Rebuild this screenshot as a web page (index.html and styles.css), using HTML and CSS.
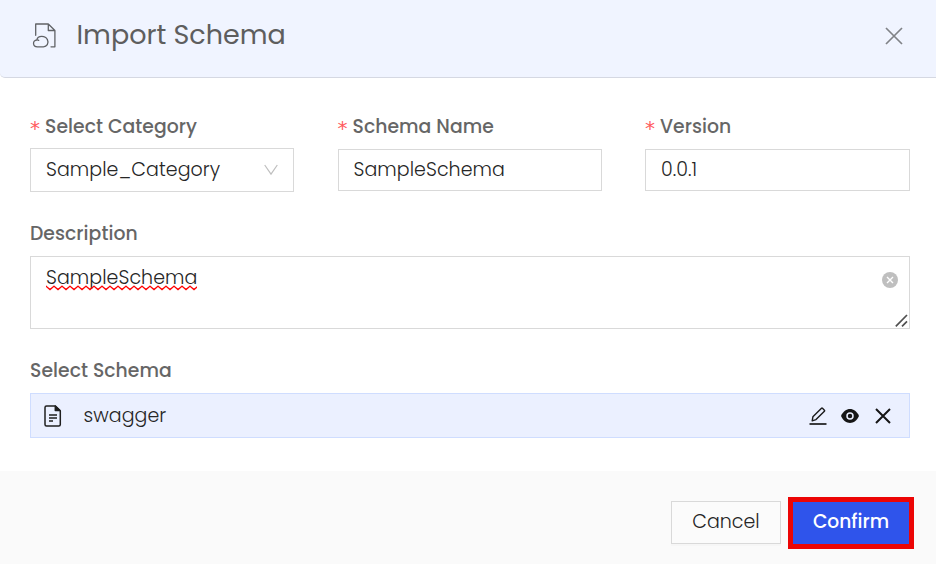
FILE: index.html
```html
<!DOCTYPE html>
<html lang="en">
<head>
<meta charset="utf-8">
<title>Import Schema</title>
<link rel="stylesheet" href="styles.css">
</head>
<body>
<div class="modal">
  <header class="header">
    <svg class="header-icon" width="26" height="26" viewBox="0 0 26 26" fill="none" stroke="#606266" stroke-width="1.3" stroke-linejoin="round" stroke-linecap="round">
      <path d="M3.7 12.3V1H16.3L22.9 7.5V23.8H19M16.3 1V7.5H22.9"/>
      <path d="M5.4 23.8C.4 23.8 .3 17.2 4.8 17C5.8 11.8 13.6 12.6 15.3 16.4C17.4 20.6 14.6 23.8 11.4 23.8ZM4.8 17Q5.8 16.8 6.7 17.4"/>
    </svg>
    <h1 class="title">Import Schema</h1>
    <svg class="close" width="18" height="18" viewBox="0 0 18 18" stroke="#808287" stroke-width="1.7"><path d="M1 1L17 17M17 1L1 17"/></svg>
  </header>
  <main class="body">
    <div class="fields">
      <div class="field">
        <div class="label"><span class="star">*</span><span>Select Category</span></div>
        <div class="control select"><span>Sample_Category</span>
          <svg width="14" height="12" viewBox="0 0 14 12" fill="none" stroke="#bfbfbf" stroke-width="1.2"><path d="M.7 1L7 10.2L13.3 1"/></svg>
        </div>
      </div>
      <div class="field">
        <div class="label"><span class="star">*</span><span>Schema Name</span></div>
        <div class="control"><span>SampleSchema</span></div>
      </div>
      <div class="field">
        <div class="label"><span class="star">*</span><span>Version</span></div>
        <div class="control"><span>0.0.1</span></div>
      </div>
    </div>
    <div class="label label-description"><span>Description</span></div>
    <div class="textarea">
      <span class="misspelt">SampleSchema<svg class="squiggle" width="151" height="6"><defs><pattern id="wave" width="8" height="6" patternUnits="userSpaceOnUse"><path d="M-1 .5L0 1.2L4 4.6L8 1.2L9 .5" fill="none" stroke="#f00" stroke-width="1.4"/></pattern></defs><rect width="151" height="6" fill="url(#wave)"/></svg></span>
      <svg class="clear" width="16" height="16" viewBox="0 0 16 16"><circle cx="8" cy="8" r="8" fill="#bfbfbf"/><path d="M5 5L11 11M11 5L5 11" stroke="#fff" stroke-width="1.4"/></svg>
      <svg class="grip" width="13" height="13" viewBox="0 0 13 13" stroke="#505050" stroke-width="1.7"><path d="M.8 12.3L12 1M7 12.3L12 7.3"/></svg>
    </div>
    <div class="label label-schema"><span>Select Schema</span></div>
    <div class="file">
      <svg class="doc" width="18" height="22" viewBox="0 0 18 22" fill="none" stroke="#1f1f1f" stroke-width="1.5" stroke-linejoin="round"><path d="M11.3 1H2.5Q1 1 1 2.5V19.5Q1 21 2.5 21H14.8Q16.3 21 16.3 19.5V6Z"/><path d="M11.3 1V5.5H16.1Z" fill="#1f1f1f"/><path d="M5 10H13M5 13H13M5 16H9" stroke-width="1.3"/></svg>
      <span class="file-name">swagger</span>
      <div class="actions">
        <svg width="18" height="18" viewBox="0 0 18 18" fill="none" stroke="#1a1a1a" stroke-width="1.4" stroke-linejoin="round"><path d="M.5 17H17.5" stroke-width="1.7"/><path d="M3.2 13.8L3.9 9.8L12.5 1.3Q13 .8 13.5 1.3L15.4 3.2Q15.9 3.7 15.4 4.2L7 12.6Z"/></svg>
        <svg width="18" height="14" viewBox="0 0 18 14"><path d="M0 7C4-2.2 14-2.2 18 7C14 16.2 4 16.2 0 7Z" fill="#161616"/><circle cx="9" cy="7" r="3" fill="#161616" stroke="#ebf0ff" stroke-width="1.5"/></svg>
        <svg class="remove" width="16" height="16" viewBox="0 0 16 16" stroke="#161616" stroke-width="2"><path d="M1 1L15 15M15 1L1 15"/></svg>
      </div>
    </div>
  </main>
  <footer class="footer">
    <button class="button cancel">Cancel</button>
    <div class="highlight"><button class="button confirm">Confirm</button></div>
  </footer>
</div>
</body>
</html>
```
FILE: styles.css
```css
* { box-sizing: border-box; }
body { margin: 0; background: #fff; color: #262626; font: 300 19px/26px Poppins, Inter, sans-serif; letter-spacing: .06px; }
svg { display: block; flex: none; }
.modal { height: 564px; display: flex; flex-direction: column; overflow: hidden; }
.header { height: 78px; flex: none; display: flex; align-items: center; padding: 1px 33px 7px 32px; background: #f0f4ff; border-bottom: 1px solid #d5d8e2; border-radius: 0 0 0 5px; }
.title { margin: -1px 0 0 18.5px; font-size: 27px; line-height: 36px; font-weight: 400; color: #5e5e5e; letter-spacing: -.02px; }
.close { margin-left: auto; }
.body { height: 393px; flex: none; padding: 34px 26px 0 30px; }
.fields { display: grid; grid-template-columns: 264px 264px 265px; column-gap: 43.5px; }
.label { display: flex; align-items: center; height: 30px; font-size: 18.8px; font-weight: 500; color: #666; letter-spacing: .04px; white-space: nowrap; }
.star { width: 15px; padding-top: 2px; color: #ff5b5e; font-family: "DejaVu Sans", sans-serif; font-size: 20px; font-weight: 400; }
.control { display: flex; align-items: center; height: 42px; margin-top: 7px; padding: 0 15px; border: 1px solid #d9d9d9; }
.select { height: 44px; margin-top: 6px; justify-content: space-between; }
.label-description { margin-top: 27px; }
.textarea { position: relative; height: 73px; margin-top: 7px; padding: 8px 15px; border: 1px solid #d9d9d9; }
.misspelt { position: relative; display: inline-block; }
.squiggle { position: absolute; left: 0; top: 20px; }
.clear { position: absolute; right: 11px; top: 15px; }
.grip { position: absolute; right: 1px; bottom: 1px; }
.label-schema { margin-top: 27px; }
.file { display: flex; align-items: center; height: 45px; margin-top: 7px; padding: 0 18px 0 13px; background: #ebf0ff; border: 1px solid #cfddff; }
.file-name { margin-left: 21.5px; letter-spacing: .06px; }
.actions { display: flex; align-items: center; gap: 14px; margin-left: auto; }
.remove { margin-left: 2px; }
.footer { flex: 1; display: flex; align-items: flex-start; justify-content: flex-end; gap: 7px; padding: 26px 22px 0; background: #fafafa; }
.button { display: flex; align-items: center; justify-content: center; padding: 0 0 2px; border: 0; font: inherit; letter-spacing: 0; color: inherit; white-space: nowrap; }
.cancel { width: 110px; height: 43px; margin-top: 4px; border: 1px solid #d9d9d9; background: #fbfbfb; box-shadow: 0 2px 0 rgba(0,0,0,.015); }
.highlight { border: 5px solid #ec0505; }
.confirm { width: 116px; height: 42px; background: #2f54eb; color: #fff; font-weight: 500; font-size: 18.67px; }
```
